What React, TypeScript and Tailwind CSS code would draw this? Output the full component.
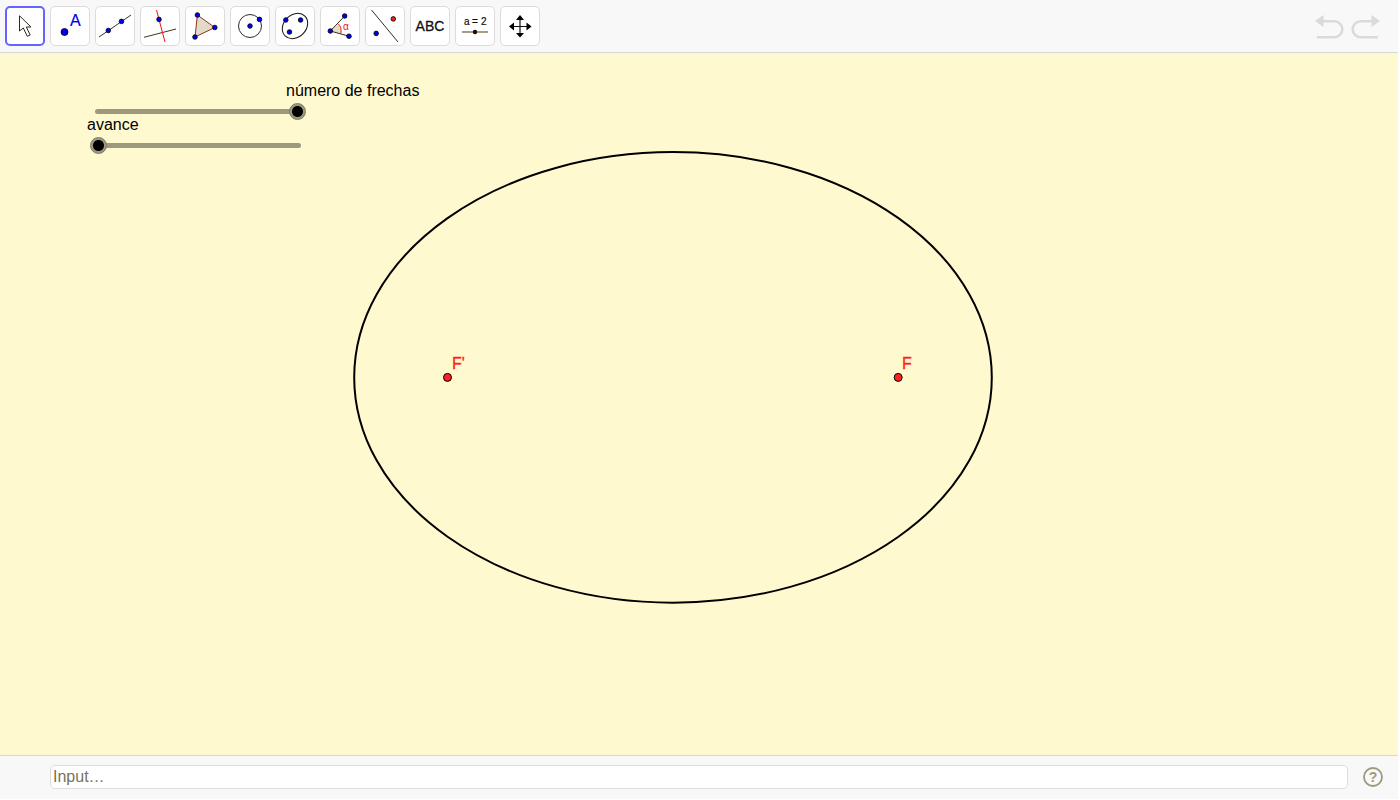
import { useState, type ReactNode } from 'react';

const BLUE = '#0000ee';

function Dot({ x, y, r = 2.3, fill = BLUE }: { x: number; y: number; r?: number; fill?: string }) {
  return <circle cx={x} cy={y} r={r} fill={fill} stroke="#000" strokeWidth="0.8" />;
}

const tools: { name: string; icon: ReactNode }[] = [
  {
    name: 'Move',
    icon: (
      <path
        d="M14.5 9.8 V25 L18.3 22 L22.3 30.3 L25.2 29 L21.3 21 H26 Z"
        fill="#fff"
        stroke="#2a2a20"
        strokeWidth="1"
      />
    ),
  },
  {
    name: 'Point',
    icon: (
      <>
        <Dot x={14.5} y={26} r={3.5} />
        <text x="20" y="20" fontSize="16" fill={BLUE} stroke={BLUE} strokeWidth="0.2">
          A
        </text>
      </>
    ),
  },
  {
    name: 'Line',
    icon: (
      <>
        <path d="M4 31 L36 9" stroke="#3a3520" strokeWidth="1" />
        <Dot x={13.3} y={24.5} />
        <Dot x={26.5} y={15.4} />
      </>
    ),
  },
  {
    name: 'Perpendicular Line',
    icon: (
      <>
        <path d="M4 31.3 L36 23" stroke="#3a3520" strokeWidth="1" />
        <path d="M16.5 4 L25 36" stroke="#ee1111" strokeWidth="1" />
        <Dot x={19} y={13.4} />
      </>
    ),
  },
  {
    name: 'Polygon',
    icon: (
      <>
        <path d="M12.4 9 L29.8 21.5 L10 31 Z" fill="#e3dac9" stroke="#8b3320" strokeWidth="1" />
        <Dot x={12.4} y={9} />
        <Dot x={29.8} y={21.5} />
        <Dot x={10} y={31} />
      </>
    ),
  },
  {
    name: 'Circle with Center through Point',
    icon: (
      <>
        <circle cx="20" cy="20" r="11.5" fill="none" stroke="#302c20" strokeWidth="1" />
        <Dot x={20} y={20} />
        <Dot x={29.5} y={13.4} />
      </>
    ),
  },
  {
    name: 'Ellipse',
    icon: (
      <>
        <ellipse
          cx="20"
          cy="20"
          rx="14"
          ry="11.2"
          transform="rotate(-45 20 20)"
          fill="none"
          stroke="#181610"
          strokeWidth="1"
        />
        <Dot x={10.8} y={14} />
        <Dot x={25.6} y={14} />
        <Dot x={14.5} y={26} />
      </>
    ),
  },
  {
    name: 'Angle',
    icon: (
      <>
        <path d="M10.3 25 L18 17.7 Q22 21 20.9 27.3 Z" fill="#e8dcc5" />
        <path d="M18 17.7 Q22 21 20.9 27.3" fill="none" stroke="#dd2222" strokeWidth="1" />
        <path d="M24.7 10 L10.3 25 L29 30.2" fill="none" stroke="#302c20" strokeWidth="1" />
        <Dot x={24.7} y={10} />
        <Dot x={10.3} y={25} />
        <Dot x={29} y={30.2} />
        <text x="23" y="24" fontSize="10" fill="#ee1111">
          α
        </text>
      </>
    ),
  },
  {
    name: 'Reflect about Line',
    icon: (
      <>
        <path d="M6.5 4 L33 36" stroke="#302c20" strokeWidth="1" />
        <Dot x={28.3} y={12.9} fill="#ee2222" />
        <Dot x={11.2} y={27.4} />
      </>
    ),
  },
  {
    name: 'Text',
    icon: (
      <text x="20" y="25" fontSize="14" textAnchor="middle" fill="#111" stroke="#111" strokeWidth="0.3">
        ABC
      </text>
    ),
  },
  {
    name: 'Slider',
    icon: (
      <>
        <text fontSize="10" fill="#111" stroke="#111" strokeWidth="0.2">
          <tspan x="9" y="18.5">
            a
          </tspan>
          <tspan x="17">=</tspan>
          <tspan x="26">2</tspan>
        </text>
        <path d="M7 26 H33" stroke="#8c7a5c" strokeWidth="1.5" />
        <circle cx="20" cy="26" r="2.2" fill="#111" />
      </>
    ),
  },
  {
    name: 'Move Graphics View',
    icon: (
      <>
        <path d="M20 11 V30 M11 20.5 H30" stroke="#111" strokeWidth="1.2" />
        <path
          d="M20 9 L24 14 H16 Z M20 31.5 L24 27 H16 Z M9 20.5 L14 16.5 V24.5 Z M31.5 20.5 L26.5 16.5 V24.5 Z"
          fill="#000"
        />
      </>
    ),
  },
];

function Arrow({ name, flip = false }: { name: string; flip?: boolean }) {
  return (
    <button type="button" aria-label={name} className="h-9 w-9">
      <svg viewBox="0 0 36 36" className="h-9 w-9">
        <g transform={flip ? 'translate(36 0) scale(-1 1)' : undefined}>
          <path d="M12 13.3 H24.3 A8 8 0 0 1 24.3 29.3 H7" fill="none" stroke="#dadada" strokeWidth="2.6" />
          <path d="M5 13 L13.5 7 V19 Z" fill="#dadada" />
        </g>
      </svg>
    </button>
  );
}

function Slider({ id, initial }: { id: string; initial: number }) {
  const [value, setValue] = useState(initial);
  return (
    <div className="relative flex h-[17px] w-[217px] items-center px-1.5">
      <span className="h-[5px] w-full rounded-full bg-[#9d997f]" />
      <input
        id={id}
        type="range"
        min={0}
        max={100}
        value={value}
        onChange={(e) => setValue(Number(e.target.value))}
        className="absolute inset-0 m-0 h-[17px] w-full appearance-none bg-transparent [&::-webkit-slider-thumb]:h-[17px] [&::-webkit-slider-thumb]:w-[17px] [&::-webkit-slider-thumb]:appearance-none [&::-webkit-slider-thumb]:rounded-full [&::-webkit-slider-thumb]:border [&::-webkit-slider-thumb]:border-[#7d7963] [&::-webkit-slider-thumb]:bg-[radial-gradient(circle,#000_5px,#9d997f_6px)] [&::-webkit-slider-thumb]:bg-origin-border"
      />
    </div>
  );
}

export default function App() {
  const [active, setActive] = useState('Move');
  return (
    <div className="flex h-screen flex-col bg-white pr-0.5 pb-px font-['Liberation_Sans',Arial,sans-serif] text-base text-black">
      <header className="flex items-center justify-between border-b border-[#d8d8d8] bg-[#f8f8f8] px-[5px] py-1.5">
        <div className="flex gap-[5px]">
          {tools.map((tool) => (
            <button
              key={tool.name}
              type="button"
              aria-label={tool.name}
              aria-pressed={active === tool.name}
              onClick={() => setActive(tool.name)}
              className={
                active === tool.name
                  ? 'flex h-10 w-10 items-center justify-center rounded-[5px] border-2 border-[#6464ff] bg-white'
                  : 'flex h-10 w-10 items-center justify-center rounded-[5px] border border-[#dcdcdc] bg-white'
              }
            >
              <svg viewBox="0 0 40 40" className="h-10 w-10 shrink-0">
                {tool.icon}
              </svg>
            </button>
          ))}
        </div>
        <div className="flex gap-[3px] pr-2">
          <Arrow name="Undo" />
          <Arrow name="Redo" flip />
        </div>
      </header>

      <main className="relative min-h-0 flex-1 overflow-hidden bg-[#fff9cf]">
        <svg width="100%" height="100%" className="absolute inset-0" aria-label="Graphics View">
          <ellipse cx="673" cy="324.4" rx="318.8" ry="225.3" fill="none" stroke="#000" strokeWidth="2" />
          <circle cx="447.5" cy="324.4" r="4" fill="#ff2020" stroke="#000" strokeWidth="1" />
          <text x="452" y="316" fontSize="16" fill="#ff2020" stroke="#ff2020" strokeWidth="0.3">
            F'
          </text>
          <circle cx="898.2" cy="324.4" r="4" fill="#ff2020" stroke="#000" strokeWidth="1" />
          <text x="902" y="316" fontSize="16" fill="#ff2020" stroke="#ff2020" strokeWidth="0.3">
            F
          </text>
        </svg>
        <div className="absolute top-7 left-[87px] flex flex-col items-start">
          <label htmlFor="frechas" className="ml-[199px] h-[22px] leading-5">
            número de frechas
          </label>
          <div className="ml-0.5">
            <Slider id="frechas" initial={100} />
          </div>
          <label htmlFor="avance" className="h-[17px] leading-[10px]">
            avance
          </label>
          <div className="ml-[3px]">
            <Slider id="avance" initial={0} />
          </div>
        </div>
      </main>

      <footer className="flex items-center border-t border-[#d8d8d8] bg-[#f8f8f8] pt-[9px] pr-3.5 pb-2.5 pl-[50px]">
        <input
          type="text"
          aria-label="Input"
          placeholder="Input…"
          className="h-6 min-w-0 flex-1 rounded-[5px] border border-[#dcdcdc] bg-white px-0.5 leading-5 outline-none placeholder:text-[#777257]"
        />
        <button type="button" aria-label="Help" className="ml-3.5 h-[22px] w-[22px]">
          <svg viewBox="0 0 22 22" className="h-[22px] w-[22px]">
            <circle cx="11" cy="11" r="9" fill="none" stroke="#9d997f" strokeWidth="1.8" />
            <text x="11" y="16" fontSize="14" fontWeight="bold" textAnchor="middle" fill="#9d997f">
              ?
            </text>
          </svg>
        </button>
      </footer>
    </div>
  );
}
